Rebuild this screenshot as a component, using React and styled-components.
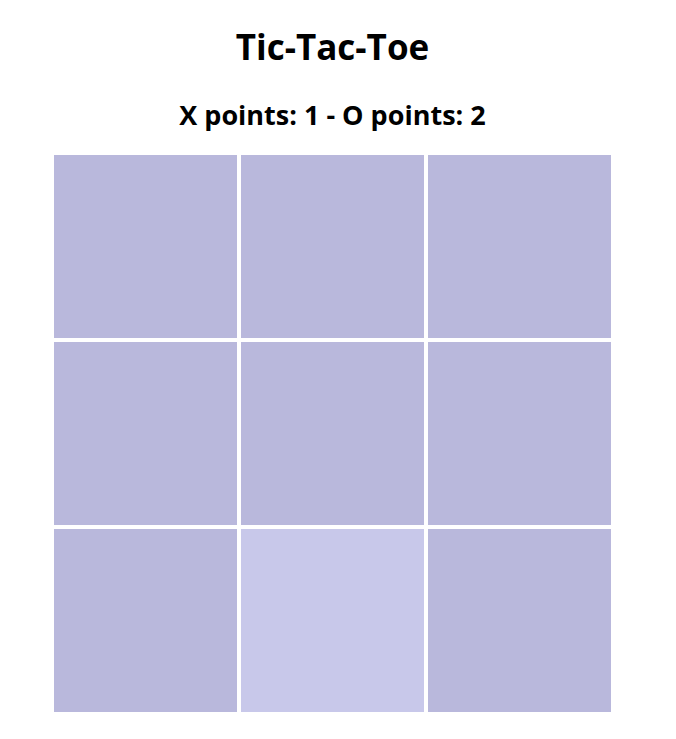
import React, { useState } from 'react'
import styled, { createGlobalStyle } from 'styled-components'

const GlobalStyle = createGlobalStyle`
  body {
    margin: 0;
    background: #ffffff;
    font-family: "Open Sans", "Noto Sans", sans-serif;
    color: #000000;
  }
`

const Game = styled.div`
  width: 557px;
  margin-left: 54px;
  display: flex;
  flex-direction: column;
  align-items: center;
`

const Title = styled.h1`
  margin: 25px 0 0;
  font-size: 35px;
  line-height: 44px;
  font-weight: 700;
`

const Score = styled.h2`
  margin: 29px 0 0;
  font-size: 27px;
  line-height: 34px;
  font-weight: 700;
`

const Board = styled.div`
  margin-top: 23px;
  display: grid;
  grid-template-columns: repeat(3, 183px);
  grid-auto-rows: 183px;
  gap: 4px;
`

const Cell = styled.button`
  border: none;
  padding: 0;
  cursor: pointer;
  background: ${(p) => (p.$hover ? '#c8c8ea' : '#b9b8dc')};
  font-family: inherit;
  font-size: 96px;
  font-weight: 700;
`

export default function App() {
  const [board, setBoard] = useState(Array(9).fill(null))
  const [hovered, setHovered] = useState(7)

  return (
    <>
      <GlobalStyle />
      <Game>
        <Title>Tic-Tac-Toe</Title>
        <Score>X points: 1 - O points: 2</Score>
        <Board>
          {board.map((value, i) => (
            <Cell
              key={i}
              $hover={hovered === i}
              onMouseEnter={() => setHovered(i)}
              onClick={() => setBoard(board.map((v, j) => (j === i && !v ? 'X' : v)))}
            >
              {value}
            </Cell>
          ))}
        </Board>
      </Game>
    </>
  )
}
